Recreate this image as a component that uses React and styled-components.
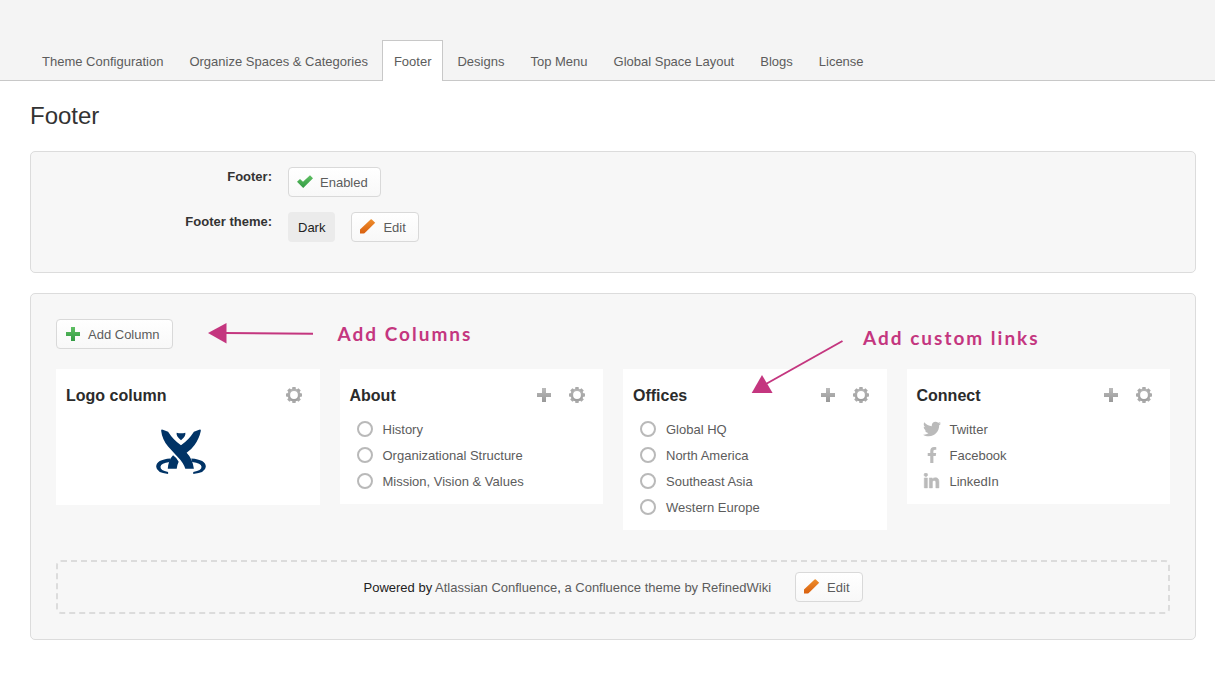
import React from 'react';
import styled, { createGlobalStyle } from 'styled-components';
import { FaTwitter, FaFacebookF, FaLinkedinIn } from 'react-icons/fa';

const GlobalStyle = createGlobalStyle`
  *, *::before, *::after { box-sizing: border-box; }
  body {
    margin: 0;
    background: #fff;
    color: #333;
    font: 13px/19px Helvetica, "Liberation Sans", Arial, sans-serif;
  }
  h1, h2, p, ul { margin: 0; padding: 0; }
  ul { list-style: none; }
  a { color: inherit; text-decoration: none; }
  svg { display: block; flex: none; }
`;

const accent = '#c4367f';

const Header = styled.header`
  padding: 40px 30px 0;
  background: #f4f4f4;
  border-bottom: 1px solid #c8c8c8;
`;

const Tabs = styled.nav`
  display: flex;
  gap: 2px;
  margin-bottom: -1px;
`;

const Tab = styled.a`
  height: 41px;
  padding: 0 11px;
  line-height: 41px;
  white-space: nowrap;
  color: #5c5c5c;
  border: 1px solid ${(p) => (p.$active ? '#c8c8c8' : 'transparent')};
  border-bottom: 0;
  background: ${(p) => (p.$active ? '#fff' : 'transparent')};
`;

const Main = styled.main`
  display: flex;
  flex-direction: column;
  gap: 20px;
  padding: 20px 19px 34px 30px;
`;

const Title = styled.h1`
  font-size: 24px;
  line-height: 30px;
  font-weight: 400;
`;

const Panel = styled.section`
  background: #f7f7f7;
  border: 1px solid #dcdcdc;
  border-radius: 5px;
`;

const Settings = styled(Panel)`
  display: flex;
  flex-direction: column;
  gap: 15px;
  padding: 15px 0 30px;
`;

const Setting = styled.div`
  display: grid;
  grid-template-columns: 241px 1fr;
  gap: 16px;
`;

const SettingName = styled.div`
  text-align: right;
  font-weight: 700;
`;

const SettingValue = styled.div`
  display: flex;
  gap: 16px;
`;

const Tag = styled.span`
  height: 30px;
  padding: 0 10px;
  line-height: 32px;
  color: #222;
  background: #ebebeb;
  border-radius: 4px;
`;

const Button = styled.button`
  display: flex;
  align-items: center;
  gap: 7px;
  height: 30px;
  padding: 0 12px 0 8px;
  font: inherit;
  color: #5c5c5c;
  background: linear-gradient(#fff, #f8f8f8);
  border: 1px solid #d9d9d9;
  border-radius: 4px;
  cursor: pointer;
`;

const Builder = styled(Panel)`
  padding: 25px;
`;

const Toolbar = styled.div`
  display: flex;
  align-items: center;
`;

const Hint = styled.div`
  display: flex;
  align-items: center;
  gap: 25px;
  margin-left: 35px;
`;

const FloatingHint = styled.div`
  position: absolute;
  top: -41px;
  left: 128px;
  display: flex;
  gap: 20px;
  pointer-events: none;
`;

const HintText = styled.span`
  font-family: Lato, sans-serif;
  font-size: 19px;
  line-height: 20px;
  font-weight: 700;
  letter-spacing: 2px;
  white-space: nowrap;
  color: ${accent};
`;

const Columns = styled.div`
  display: grid;
  grid-template-columns: repeat(4, minmax(0, 1fr));
  align-items: start;
  gap: 20px;
  margin-top: 20px;
`;

const Card = styled.article`
  position: relative;
  padding: 10px;
  background: #fff;
`;

const CardHead = styled.div`
  display: flex;
  align-items: center;
  gap: 17px;
  height: 32px;
  margin-bottom: 5px;
  padding-right: 8px;
`;

const CardTitle = styled.h2`
  flex: 1;
  font-size: 16px;
  line-height: 21px;
  font-weight: 700;
  color: #2b2b2b;
`;

const IconButton = styled.button`
  padding: 0;
  border: 0;
  background: none;
  cursor: pointer;
`;

const LogoBox = styled.div`
  display: flex;
  justify-content: center;
  height: 79px;
  padding: 13px 14px 0 0;
`;

const LinkItem = styled.li`
  a {
    display: flex;
    align-items: center;
    gap: 10px;
    height: 26px;
    padding-left: 7px;
    color: #5c5c5c;
  }
`;

const Bullet = styled.span`
  width: 16px;
  height: 16px;
  border: 2px solid #b9b9b9;
  border-radius: 50%;
`;

const Social = styled.span`
  display: flex;
  justify-content: center;
  width: 16px;
  color: #bababa;
`;

const Powered = styled.footer`
  display: flex;
  align-items: center;
  justify-content: center;
  gap: 24px;
  height: 54px;
  margin-top: 30px;
  border: 2px dashed #dcdcdc;
  border-radius: 5px;
  color: #222;
  a { color: #5c5c5c; }
`;

const Gradients = () => (
  <svg width="0" height="0" style={{ position: 'absolute' }} aria-hidden="true">
    <defs>
      <linearGradient id="green" x1="0" y1="0" x2="0" y2="1">
        <stop offset="0" stopColor="#5fbf63" /><stop offset="1" stopColor="#329b43" />
      </linearGradient>
      <linearGradient id="orange" x1="0" y1="0" x2="0" y2="1">
        <stop offset="0" stopColor="#ee8e2c" /><stop offset="1" stopColor="#d9600f" />
      </linearGradient>
      <linearGradient id="grey" gradientUnits="userSpaceOnUse" x1="0" y1="0" x2="0" y2="16">
        <stop offset="0" stopColor="#bdbdbd" /><stop offset="1" stopColor="#969696" />
      </linearGradient>
    </defs>
  </svg>
);

const Check = () => (
  <svg width="16" height="16" viewBox="0 0 16 16"><path d="M0 7.800 3 4.900 6 7.800 13 1.300 16 4.200 6.200 13.900Z" fill="url(#green)" /></svg>
);
const Pencil = () => (
  <svg width="16" height="16" viewBox="0 0 16 16"><path d="M0 14.600V10.600L10.600 .4Q11.200 -.1 11.800 .4L15.200 3.700 4.500 14.200 3.600 14.600Z" fill="url(#orange)" /></svg>
);
const Plus = ({ tone }) => (
  <svg width="16" height="16" viewBox="0 0 16 16"><path d="M6 1h4v5h5v4h-5v5H6v-5H1V6h5Z" fill={`url(#${tone})`} /></svg>
);
const Gear = () => (
  <svg width="16" height="16" viewBox="0 0 16 16">
    <circle cx="8" cy="8" r="5.200" fill="none" stroke="url(#grey)" strokeWidth="2.600" />
    {[0, 45, 90, 135, 180, 225, 270, 315].map((a) => (
      <path key={a} d="M6.400 0h3.200l.3 2.600H6.100Z" fill="#aaa" transform={`rotate(${a} 8 8)`} />
    ))}
  </svg>
);

const Logo = () => (
  <svg width="50" height="45" viewBox="378 432 150 136" role="img" aria-label="Company logo">
    <g fill="#003366">
      <path d="M393 437Q393 432 398 434L414 440Q429 464 453 481Q477 464 492 440L508 434Q513 432 513 437Q508 461 494 480Q485 493 470 504Q487 521 492 552H466Q461 534 441 514L414 485Q396 463 393 437Z" />
      <path d="M440 443Q453 447 466 443Q469 452 453 466Q437 452 440 443Z" />
      <path d="M429 511Q441 519 446 531Q441 541 440 552H413Q415 525 429 511Z" />
      <path d="M421 521Q378 524 378 546Q379 564 414 568V562Q390 557 391 546Q392 536 419 532Z" />
      <path d="M484 521Q528 524 528 546Q527 564 490 568V562Q516 557 515 546Q514 536 487 532Z" />
    </g>
  </svg>
);

const ArrowLeft = () => (
  <svg width="105" height="22" viewBox="0 0 105 22" aria-hidden="true">
    <path d="M0 10 18.500 0V20.500Z" fill={accent} />
    <path d="M17 10 105 10.800" stroke={accent} strokeWidth="2" />
  </svg>
);
const ArrowDown = () => (
  <svg width="92" height="66" viewBox="0 0 92 66" aria-hidden="true">
    <path d="M.7 65 11 47 21.600 65Z" fill={accent} />
    <path d="M14 56.500 91.500 13" stroke={accent} strokeWidth="2" />
  </svg>
);

const tabs = ['Theme Configuration', 'Organize Spaces & Categories', 'Footer', 'Designs', 'Top Menu', 'Global Space Layout', 'Blogs', 'License'];

const columns = [
  { title: 'Logo column', logo: true },
  { title: 'About', links: ['History', 'Organizational Structure', 'Mission, Vision & Values'] },
  { title: 'Offices', hint: 'Add custom links', links: ['Global HQ', 'North America', 'Southeast Asia', 'Western Europe'] },
  { title: 'Connect', links: ['Twitter', 'Facebook', 'LinkedIn'] },
];

const socialIcons = {
  Twitter: <FaTwitter size={18} />,
  Facebook: <FaFacebookF size={16} />,
  LinkedIn: <FaLinkedinIn size={17} stroke="currentColor" strokeWidth={16} />,
};

const FooterColumn = ({ title, links, logo, hint }) => (
  <Card>
    <CardHead>
      <CardTitle>{title}</CardTitle>
      {!logo && <IconButton aria-label={`Add link to ${title}`}><Plus tone="grey" /></IconButton>}
      <IconButton aria-label={`${title} settings`}><Gear /></IconButton>
    </CardHead>
    {logo ? <LogoBox><Logo /></LogoBox> : (
      <ul>
        {links.map((name) => (
          <LinkItem key={name}>
            <a href="#link">
              {socialIcons[name] ? <Social>{socialIcons[name]}</Social> : <Bullet />}
              {name}
            </a>
          </LinkItem>
        ))}
      </ul>
    )}
    {hint && <FloatingHint><ArrowDown /><HintText>{hint}</HintText></FloatingHint>}
  </Card>
);

export default function App() {
  return (
    <>
      <GlobalStyle />
      <Gradients />
      <Header>
        <Tabs>
          {tabs.map((name) => (
            <Tab key={name} href="#tab" $active={name === 'Footer'}>{name}</Tab>
          ))}
        </Tabs>
      </Header>
      <Main>
        <Title>Footer</Title>
        <Settings>
          <Setting>
            <SettingName>Footer:</SettingName>
            <SettingValue><Button><Check />Enabled</Button></SettingValue>
          </Setting>
          <Setting>
            <SettingName>Footer theme:</SettingName>
            <SettingValue><Tag>Dark</Tag><Button><Pencil />Edit</Button></SettingValue>
          </Setting>
        </Settings>
        <Builder>
          <Toolbar>
            <Button><Plus tone="green" />Add Column</Button>
            <Hint><ArrowLeft /><HintText>Add Columns</HintText></Hint>
          </Toolbar>
          <Columns>
            {columns.map((column) => <FooterColumn key={column.title} {...column} />)}
          </Columns>
          <Powered>
            <p>Powered by <a href="#confluence">Atlassian Confluence</a>, <a href="#theme">a Confluence theme by RefinedWiki</a></p>
            <Button><Pencil />Edit</Button>
          </Powered>
        </Builder>
      </Main>
    </>
  );
}
